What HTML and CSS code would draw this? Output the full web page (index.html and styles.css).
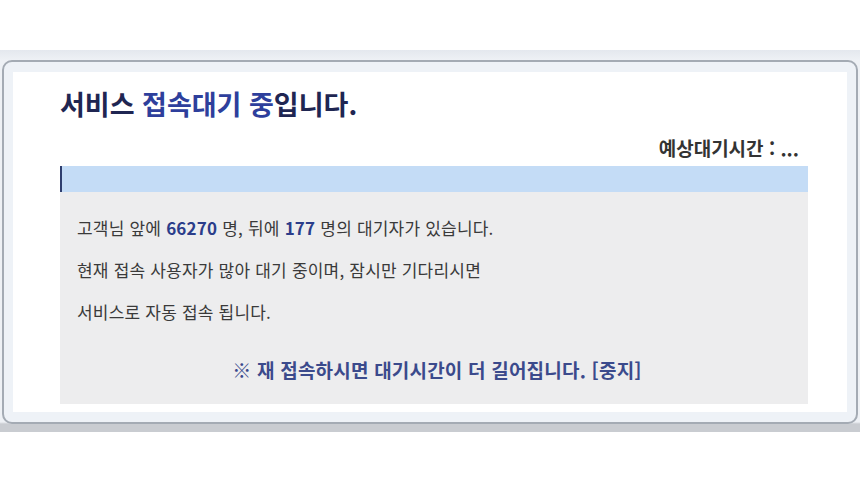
FILE: index.html
```html
<!DOCTYPE html>
<html lang="ko">
<head>
<meta charset="utf-8">
<title>서비스 접속대기</title>
<link rel="stylesheet" href="styles.css">
</head>
<body>
<div class="backdrop">
  <div class="dialog">
    <div class="panel">
      <h1 class="title">서비스 <span class="accent">접속대기 중</span>입니다.</h1>
      <div class="eta">예상대기시간 : ...</div>
      <div class="bar"></div>
      <div class="info">
        <p class="line">고객님 앞에 <b class="num">66270</b> 명, 뒤에 <b class="num">177</b> 명의 대기자가 있습니다.</p>
        <p class="line">현재 접속 사용자가 많아 대기 중이며, 잠시만 기다리시면</p>
        <p class="line">서비스로 자동 접속 됩니다.</p>
        <p class="notice">※ 재 접속하시면 대기시간이 더 길어집니다. [중지]</p>
      </div>
    </div>
  </div>
</div>
</body>
</html>
```

FILE: styles.css
```css
html, body {
  margin: 0;
  padding: 0;
  background: #ffffff;
}
body {
  width: 860px;
  height: 484px;
  overflow: hidden;
  font-family: "Noto Sans CJK KR", "Noto Sans", sans-serif;
}
.backdrop {
  margin-top: 50px;
  height: 382px;
  box-sizing: border-box;
  padding: 10px 2px 8px 2px;
  background: linear-gradient(to bottom, #e4e8ee 0, #eef1f5 10px, #eef1f5 372px, #c9ccd1 374px, #c9ccd1 382px);
}
.dialog {
  height: 364px;
  box-sizing: border-box;
  border: 2px solid #a4abb4;
  border-radius: 10px;
  background: #eef2f7;
  padding: 10px 9px 10px 9px;
}
.panel {
  height: 100%;
  box-sizing: border-box;
  background: #ffffff;
  padding: 17px 39px 0 47px;
}
.title {
  margin: 0;
  font-size: 27px;
  line-height: 30px;
  font-weight: 700;
  color: #1f2652;
}
.accent {
  color: #2e3f9c;
}
.eta {
  margin-top: 18px;
  text-align: right;
  font-size: 19px;
  line-height: 22px;
  font-weight: 700;
  color: #333333;
  padding-right: 9px;
}
.bar {
  margin-top: 7px;
  height: 26px;
  box-sizing: border-box;
  background: #c4dcf6;
  border-left: 2px solid #2f3e6e;
}
.info {
  height: 212px;
  box-sizing: border-box;
  background: #ededee;
  padding: 15px 17px 0 17px;
}
.line {
  margin: 0;
  font-size: 17px;
  line-height: 42px;
  color: #3a3a3a;
  letter-spacing: 0.2px;
}
.num {
  color: #2b3d8a;
  font-weight: 700;
}
.notice {
  margin: 24px 0 0 6px;
  text-align: center;
  font-size: 19px;
  line-height: 26px;
  font-weight: 700;
  color: #3b4a8c;
  letter-spacing: 0.2px;
}
```
